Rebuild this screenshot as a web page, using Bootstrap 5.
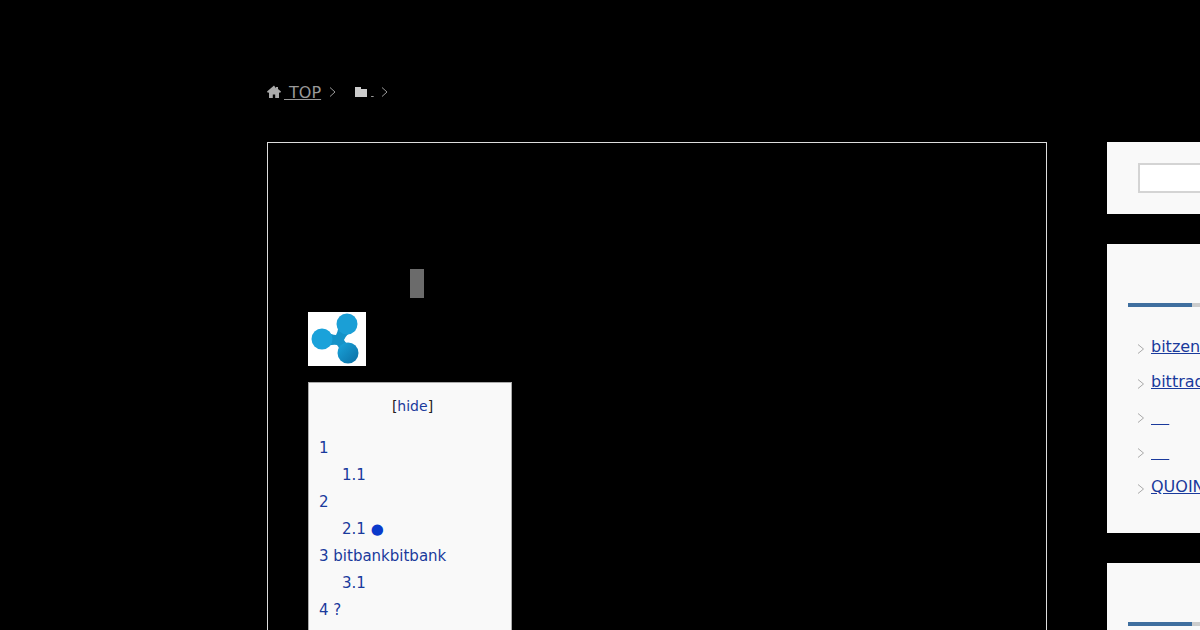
<!DOCTYPE html>
<html lang="ja">
<head>
  <meta charset="UTF-8" />
  <meta name="viewport" content="width=device-width, initial-scale=1.0"/>
  <title>TOP</title>
  <link href="https://cdn.jsdelivr.net/npm/bootstrap@5.3.3/dist/css/bootstrap.min.css" rel="stylesheet">
  <style>
    html, body { height: 630px; overflow: hidden; }
    body { background: #000; font-family: "DejaVu Sans", sans-serif; font-size: 16px; color: #333; }
    a { color: #1a3a9c; }
    .page-wrap { width: 1200px; height: 630px; overflow: hidden; padding: 82px 0 0 267px; }
    .crumbs { height: 20px; line-height: 20px; color: #999; margin-bottom: 40px; }
    .crumbs a { color: #999; position: relative; top: 1px; }
    .crumbs svg { flex: none; }
    .layout { gap: 60px; width: 1200px; }
    .article-box { width: 780px; height: 700px; flex: none; border: 1px solid #ddd; padding: 126px 40px 0; }
    .grey-block { width: 14px; height: 29px; background: #6b6b6b; margin-left: 102px; }
    .coin-logo { display: block; width: 58px; height: 54px; background: #fff; margin-top: 14px; }
    .toc-box { width: 204px; background: #f9f9f9; border: 1px solid #aaa; margin-top: 16px; padding: 10px; color: #222; }
    .toc-title { text-align: center; line-height: 27px; margin-bottom: 15px; font-size: 14px; padding-left: 5px; }
    .toc-title a { text-decoration: none; }
    .toc-list { list-style: none; margin: 0; padding: 0; line-height: 27px; font-size: 15px; }
    .toc-list a { text-decoration: none; }
    .toc-sub { padding-left: 23px; }
    .toc-dot { color: #0a3acb; }
    .side-col { width: 320px; flex: none; }
    .side-box { background: #f9f9f9; }
    .search-box { height: 72px; padding: 21px 0 0 31px; margin-bottom: 30px; }
    .search-input { width: 280px; height: 30px; background: #fff; border: 2px solid #d4d4d4; display: block; }
    .links-box { height: 289px; padding: 59px 0 0 21px; margin-bottom: 30px; }
    .side-rule { height: 4px; background: #ccc; margin-bottom: 22px; }
    .side-rule span { display: block; width: 64px; height: 4px; background: #3f6f9f; }
    .side-links { list-style: none; margin: 0; padding: 0 0 0 9px; }
    .side-links li { height: 35px; line-height: 24px; display: flex; align-items: center; gap: 6px; }
    .side-links a { white-space: pre; }
    .side-links svg { margin-top: 4px; flex: none; }
    .side-links .blank-row svg { margin-top: 2px; }
    .blank-link { letter-spacing: 1px; position: relative; top: 1px; }
    .side-next { padding: 59px 0 0 21px; height: 100px; }
  </style>
</head>
<body>
  <div class="page-wrap">
    <div class="crumbs d-flex align-items-center">
      <svg width="14" height="14" viewBox="0 0 14 14"><path fill="#aaa" d="M7 .5 0 6.500 1 8l1-.8V13h3.800V9.500h2.400V13H12V7.200l1 .8 1-1.500-3-2.600V2H9v1.300z"/></svg>
      <a href="#" class="text-nowrap" style="margin-left:3px">&nbsp;TOP</a>
      <svg style="margin-left:7px" width="9" height="12" viewBox="0 0 9 12"><path fill="none" stroke="#999" d="M2 1.500 7 6l-5 4.500"/></svg>
      <svg style="margin-left:17px" width="14" height="12" viewBox="0 0 14 12"><path fill="#ccc" d="M1 1h6v2h6v8H1z"/></svg>
      <a href="#" style="font-size:8px;margin-left:3px">&nbsp;</a>
      <svg style="margin-left:6px" width="9" height="12" viewBox="0 0 9 12"><path fill="none" stroke="#999" d="M2 1.500 7 6l-5 4.500"/></svg>
    </div>
    <div class="layout d-flex align-items-start">
      <div class="article-box">
        <div class="grey-block"></div>
        <svg class="coin-logo" viewBox="0 0 58 54">
          <defs><linearGradient id="rip" x1="0" y1="0" x2="1" y2="1"><stop offset="0" stop-color="#1aa5dc"/><stop offset="1" stop-color="#0b6ea3"/></linearGradient></defs>
          <rect width="58" height="54" fill="#fff"/>
          <path fill="#1593c8" d="M14 18Q24 23 28 23 31 18 30 10L48 18Q38 22 36 28 38 33 48 34L32 47Q33 37 29 33 22 32 14 37Z"/>
          <circle cx="39" cy="12" r="10.500" fill="#1b9fd6"/>
          <circle cx="14" cy="27" r="10.500" fill="#1aa2da"/>
          <circle cx="40" cy="41" r="10.500" fill="url(#rip)"/>
        </svg>
        <div class="toc-box">
          <div class="toc-title">[<a href="#">hide</a>]</div>
          <ul class="toc-list">
            <li><a href="#">1</a></li>
            <li class="toc-sub"><a href="#">1.1</a></li>
            <li><a href="#">2</a></li>
            <li class="toc-sub"><a href="#">2.1 <span class="toc-dot">●</span></a></li>
            <li><a href="#">3 bitbankbitbank</a></li>
            <li class="toc-sub"><a href="#">3.1</a></li>
            <li><a href="#">4 ?</a></li>
          </ul>
        </div>
      </div>
      <div class="side-col">
        <div class="side-box search-box"><span class="search-input"></span></div>
        <div class="side-box links-box">
          <div class="side-rule"><span></span></div>
          <ul class="side-links">
            <li><svg width="8" height="12" viewBox="0 0 8 12"><path fill="none" stroke="#aaa" d="M1 1.500 6.500 6 1 10.500"/></svg><a href="#">bitzeny</a></li>
            <li><svg width="8" height="12" viewBox="0 0 8 12"><path fill="none" stroke="#aaa" d="M1 1.500 6.500 6 1 10.500"/></svg><a href="#">bittrade</a></li>
            <li class="blank-row"><svg width="8" height="12" viewBox="0 0 8 12"><path fill="none" stroke="#aaa" d="M1 1.500 6.500 6 1 10.500"/></svg><a href="#" class="blank-link">&nbsp;&nbsp;&nbsp;</a></li>
            <li class="blank-row"><svg width="8" height="12" viewBox="0 0 8 12"><path fill="none" stroke="#aaa" d="M1 1.500 6.500 6 1 10.500"/></svg><a href="#" class="blank-link">&nbsp;&nbsp;&nbsp;</a></li>
            <li><svg width="8" height="12" viewBox="0 0 8 12"><path fill="none" stroke="#aaa" d="M1 1.500 6.500 6 1 10.500"/></svg><a href="#">QUOINEX</a></li>
          </ul>
        </div>
        <div class="side-box side-next"><div class="side-rule"><span></span></div></div>
      </div>
    </div>
  </div>
  <script src="https://cdn.jsdelivr.net/npm/bootstrap@5.3.3/dist/js/bootstrap.bundle.min.js"></script>
</body>
</html>
